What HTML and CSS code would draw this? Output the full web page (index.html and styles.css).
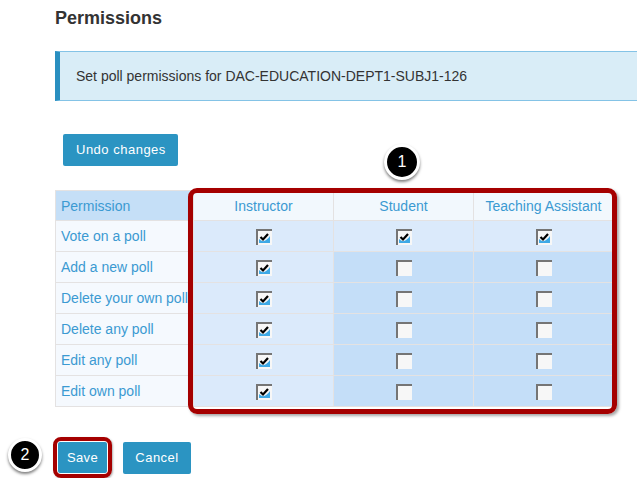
FILE: index.html
```html
<!DOCTYPE html>
<html>
<head>
<meta charset="utf-8">
<link rel="stylesheet" href="styles.css">
</head>
<body>
<svg class="defs" width="0" height="0" aria-hidden="true">
  <defs>
    <symbol id="cb-off" viewBox="0 0 16 16">
      <rect width="16" height="16" fill="#f7f7f7"/>
      <path d="M0 0H16V2H2V16H0Z" fill="#757575"/>
    </symbol>
    <symbol id="cb-on" viewBox="0 0 16 16">
      <rect width="16" height="16" fill="#f7f7f7"/>
      <path d="M0 0H16V2H2V16H0Z" fill="#757575"/>
      <path d="M3 10Q8 15.5 14 7V14H3Z" fill="#3ea9e6"/>
      <path d="M4.5 8L7 10.5L12 5" stroke="#000" stroke-width="2.2" fill="none"/>
    </symbol>
  </defs>
</svg>
<div class="page">
  <h1 class="title">Permissions</h1>
  <div class="info">Set poll permissions for DAC-EDUCATION-DEPT1-SUBJ1-126</div>
  <div class="undo-row"><button class="btn">Undo changes</button></div>

  <div class="table-wrap">
    <table class="perm">
      <thead>
        <tr>
          <th class="c-name">Permission</th>
          <th class="c-role">Instructor</th>
          <th class="c-role">Student</th>
          <th class="c-role">Teaching Assistant</th>
        </tr>
      </thead>
      <tbody>
        <tr class="first">
          <td class="c-name">Vote on a poll</td>
          <td class="c-inst"><svg class="cb"><use href="#cb-on"/></svg></td>
          <td class="c-other"><svg class="cb"><use href="#cb-on"/></svg></td>
          <td class="c-other"><svg class="cb"><use href="#cb-on"/></svg></td>
        </tr>
        <tr>
          <td class="c-name">Add a new poll</td>
          <td class="c-inst"><svg class="cb"><use href="#cb-on"/></svg></td>
          <td class="c-other"><svg class="cb"><use href="#cb-off"/></svg></td>
          <td class="c-other"><svg class="cb"><use href="#cb-off"/></svg></td>
        </tr>
        <tr>
          <td class="c-name">Delete your own poll</td>
          <td class="c-inst"><svg class="cb"><use href="#cb-on"/></svg></td>
          <td class="c-other"><svg class="cb"><use href="#cb-off"/></svg></td>
          <td class="c-other"><svg class="cb"><use href="#cb-off"/></svg></td>
        </tr>
        <tr>
          <td class="c-name">Delete any poll</td>
          <td class="c-inst"><svg class="cb"><use href="#cb-on"/></svg></td>
          <td class="c-other"><svg class="cb"><use href="#cb-off"/></svg></td>
          <td class="c-other"><svg class="cb"><use href="#cb-off"/></svg></td>
        </tr>
        <tr>
          <td class="c-name">Edit any poll</td>
          <td class="c-inst"><svg class="cb"><use href="#cb-on"/></svg></td>
          <td class="c-other"><svg class="cb"><use href="#cb-off"/></svg></td>
          <td class="c-other"><svg class="cb"><use href="#cb-off"/></svg></td>
        </tr>
        <tr>
          <td class="c-name">Edit own poll</td>
          <td class="c-inst"><svg class="cb"><use href="#cb-on"/></svg></td>
          <td class="c-other"><svg class="cb"><use href="#cb-off"/></svg></td>
          <td class="c-other"><svg class="cb"><use href="#cb-off"/></svg></td>
        </tr>
      </tbody>
    </table>
    <div class="highlight"></div>
    <div class="badge badge-1">1</div>
  </div>

  <div class="actions">
    <div class="badge badge-2">2</div>
    <div class="save-frame"><button class="btn btn-save">Save</button></div>
    <button class="btn btn-cancel">Cancel</button>
  </div>
</div>
</body>
</html>
```
FILE: styles.css
```css
html, body {
  margin: 0;
  padding: 0;
  overflow: hidden;
  background: #ffffff;
}
body {
  font-family: "Liberation Sans", Arial, sans-serif;
  color: #333333;
}
.defs {
  position: absolute;
  width: 0;
  height: 0;
}
.page {
  padding: 8px 0 0 55px;
}
.title {
  margin: 0;
  font-size: 18px;
  line-height: 20px;
  font-weight: bold;
  color: #333333;
}
.info {
  margin-top: 23px;
  background: #d9edf7;
  border-top: 1px solid #84c3e6;
  border-bottom: 1px solid #84c3e6;
  border-left: 5px solid #2a8fc0;
  padding: 16px 0 16px 16px;
  font-size: 14px;
  line-height: 16px;
  color: #333333;
}
.undo-row {
  margin-top: 33px;
  padding-left: 8px;
}
.btn {
  display: inline-block;
  background: #2b94c2;
  color: #ffffff;
  border: none;
  border-radius: 2px;
  font-family: "Liberation Sans", Arial, sans-serif;
  font-size: 13px;
  line-height: 16px;
  letter-spacing: 0.5px;
  height: 32px;
  padding: 0 12px 0 13px;
  margin: 0;
}
.table-wrap {
  position: relative;
  margin-top: 24px;
  width: 558px;
}
.perm {
  border-collapse: collapse;
  table-layout: fixed;
  width: 558px;
  font-size: 14px;
  color: #3b9ad2;
}
.perm th, .perm td {
  border: 1px solid #e4e2e2;
  padding: 0;
  font-weight: normal;
  white-space: nowrap;
  overflow: hidden;
}
.perm thead tr {
  height: 30px;
}
.perm tbody tr {
  height: 31px;
}
.perm .c-name {
  width: 132px;
  text-align: left;
  padding-left: 5px;
  background: #f5f9fe;
}
.perm thead .c-name {
  background: #c5dff7;
}
.perm th.c-role {
  width: 139px;
  text-align: center;
  background: #f2f8fd;
}
.perm td.c-inst {
  text-align: center;
  background: #dbeafb;
}
.perm td.c-other {
  text-align: center;
  background: #c4def8;
}
.perm tr.first td.c-other {
  background: #dbeafb;
}
.cb {
  display: inline-block;
  width: 16px;
  height: 16px;
  vertical-align: middle;
}
.highlight {
  position: absolute;
  left: 133px;
  top: -2px;
  width: 429px;
  height: 226px;
  box-sizing: border-box;
  border: 5px solid #a50000;
  border-radius: 9px;
  box-shadow: 2px 2px 3px rgba(0, 0, 0, 0.35);
  pointer-events: none;
}
.badge {
  position: absolute;
  box-sizing: border-box;
  border-radius: 50%;
  background: #000000;
  border: 3px solid #ffffff;
  color: #ffffff;
  font-size: 16px;
  text-align: center;
  box-shadow: 0 2px 3px rgba(0, 0, 0, 0.5);
}
.badge-1 {
  left: 329px;
  top: -46px;
  width: 36px;
  height: 36px;
  line-height: 30px;
}
.actions {
  position: relative;
  margin-top: 30px;
  display: flex;
  align-items: center;
  gap: 11px;
  padding-left: 0;
}
.save-frame {
  margin-left: -2px;
  border: 4px solid #a50000;
  border-radius: 8px;
  padding: 1px;
  display: flex;
  box-shadow: 1px 1px 2px rgba(0, 0, 0, 0.3);
}
.btn-save {
  height: 31px;
  width: 49px;
  padding: 0;
  letter-spacing: 0.3px;
}
.btn-cancel {
  height: 32px;
  width: 68px;
  padding: 0;
  letter-spacing: 0.5px;
}
.badge-2 {
  left: -47px;
  top: 1px;
  width: 34px;
  height: 34px;
  line-height: 28px;
}
```
